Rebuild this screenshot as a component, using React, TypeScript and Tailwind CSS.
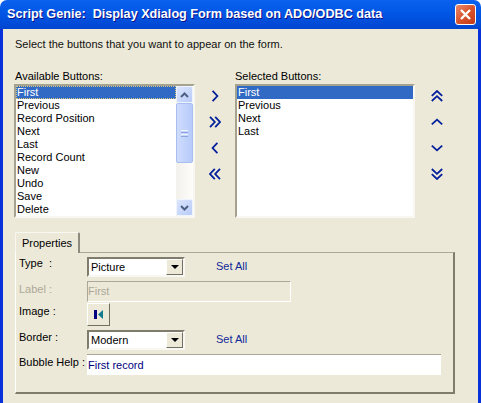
const available = ["First", "Previous", "Record Position", "Next", "Last", "Record Count", "New", "Undo", "Save", "Delete"];
const selected = ["First", "Previous", "Next", "Last"];

function Chevrons({ dir, double }: { dir: "left" | "right" | "up" | "down"; double?: boolean }) {
  const rotate = { right: "", down: "rotate-90", left: "rotate-180", up: "-rotate-90" }[dir];
  return (
    <svg width="12" height="12" viewBox="0 0 12 12" className={rotate} fill="none" stroke="#03209c" strokeWidth="1.8">
      {double ? (
        <>
          <path d="M1 .8 L5.8 6 L1 11.2" />
          <path d="M6.2 .8 L11 6 L6.2 11.2" />
        </>
      ) : (
        <path d="M3.6 .8 L8.4 6 L3.6 11.2" />
      )}
    </svg>
  );
}

function ListBox({ items, focused, children }: { items: string[]; focused?: boolean; children?: React.ReactNode }) {
  return (
    <div className="flex h-[134px] bg-white border-2 border-t-[#a5a290] border-l-[#a5a290] border-r-[#f8f7f2] border-b-[#f8f7f2]">
      <div className="flex-1 min-w-0 overflow-hidden">
        {items.map((item, i) => (
          <div
            key={item}
            className={
              "h-[13px] leading-[13px] pl-px " +
              (i === 0 ? "bg-[#316ac5] text-white " : "text-black ") +
              (i === 0 && focused ? "outline-1 -outline-offset-1 outline-dotted outline-[#d8c880]" : "")
            }
          >
            {item}
          </div>
        ))}
      </div>
      {children}
    </div>
  );
}

function ScrollBar() {
  return (
    <div className="w-[17px] flex flex-col bg-gradient-to-r from-[#f3f1ec] to-[#fdfdfa]">
      <div className="h-[17px] flex items-center justify-center bg-gradient-to-br from-[#dbe5fd] to-[#b9cbf8] border border-[#eef3fe] rounded-[2px]">
        <svg width="9" height="6" viewBox="0 0 9 6" fill="none" stroke="#4d6185" strokeWidth="2"><path d="M1 5 L4.5 1.5 L8 5" /></svg>
      </div>
      <div className="h-[60px] flex flex-col items-center justify-center gap-px bg-gradient-to-r from-[#cfdcfd] to-[#b7cbfa] border border-[#a9bef0] rounded-[2px]">
        <div className="w-[7px] h-px bg-[#eef3fe]" />
        <div className="w-[7px] h-px bg-[#8ca5dd]" />
        <div className="w-[7px] h-px bg-[#eef3fe]" />
        <div className="w-[7px] h-px bg-[#8ca5dd]" />
      </div>
      <div className="flex-1" />
      <div className="h-[17px] flex items-center justify-center bg-gradient-to-br from-[#dbe5fd] to-[#b9cbf8] border border-[#eef3fe] rounded-[2px]">
        <svg width="9" height="6" viewBox="0 0 9 6" fill="none" stroke="#4d6185" strokeWidth="2"><path d="M1 1 L4.5 4.5 L8 1" /></svg>
      </div>
    </div>
  );
}

function Combo({ value }: { value: string }) {
  return (
    <div className="w-[98px] h-[20px] flex items-center justify-between bg-white border-2 border-t-[#7f7c6e] border-l-[#7f7c6e] border-r-[#f8f7f2] border-b-[#f8f7f2]">
      <span className="pl-[2px] text-black">{value}</span>
      <div className="w-[17px] h-[16px] flex items-center justify-center bg-[#ece9d8] border border-t-white border-l-white border-r-[#716f64] border-b-[#716f64]">
        <div className="w-0 h-0 border-x-[4px] border-x-transparent border-t-[4px] border-t-black" />
      </div>
    </div>
  );
}

function Row({ label, disabled, labelClass, children, height }: { label: string; disabled?: boolean; labelClass: string; children: React.ReactNode; height: string }) {
  return (
    <div className={"flex " + height}>
      <span className={"w-[68px] shrink-0 leading-[13px] whitespace-pre " + labelClass + (disabled ? " text-[#aca899]" : " text-black")}>{label}</span>
      {children}
    </div>
  );
}

export default function App() {
  return (
    <div className="w-[481px] h-[403px] flex flex-col overflow-hidden text-[11px] font-['Liberation_Sans',sans-serif]">
      {/* Title bar */}
      <div className="h-[29px] shrink-0 flex items-center justify-between pl-[7px] pr-[5px] rounded-t-[7px] bg-gradient-to-b from-[#0a62ee] via-[#0055e5] to-[#0245cf]">
        <span className="text-white font-bold text-[12.65px] [text-shadow:1px_1px_#0f1089]">Script Genie:&nbsp; Display Xdialog Form based on ADO/ODBC data</span>
        <div className="w-[21px] h-[21px] flex items-center justify-center rounded-[3px] bg-gradient-to-br from-[#e88a6a] via-[#d9532c] to-[#c23a16] border border-white">
          <svg width="13" height="13" viewBox="0 0 13 13" stroke="white" strokeWidth="2.4"><path d="M2 2 L11 11 M11 2 L2 11" /></svg>
        </div>
      </div>

      {/* Client area */}
      <div className="flex-1 flex flex-col bg-[#ece9d8] border-x-[3px] border-x-[#0831d9] pl-[11px] pt-[9px]">
        <p className="leading-[13px] pl-px text-[#111]">Select the buttons that you want to appear on the form.</p>

        <div className="flex mt-[19px]">
          <div className="w-[181px] shrink-0">
            <p className="leading-[13px] pl-px mb-px text-black">Available Buttons:</p>
            <ListBox items={available} focused>
              <ScrollBar />
            </ListBox>
          </div>
          <div className="w-[40px] shrink-0 pt-[20px] flex flex-col items-center gap-[14px]">
            <Chevrons dir="right" />
            <Chevrons dir="right" double />
            <Chevrons dir="left" />
            <Chevrons dir="left" double />
          </div>
          <div className="w-[180px] shrink-0">
            <p className="leading-[13px] mb-px text-black">Selected Buttons:</p>
            <ListBox items={selected} />
          </div>
          <div className="w-[44px] shrink-0 pt-[20px] flex flex-col items-center gap-[14px]">
            <Chevrons dir="up" double />
            <Chevrons dir="up" />
            <Chevrons dir="down" />
            <Chevrons dir="down" double />
          </div>
        </div>

        {/* Properties tab */}
        <div className="w-[440px] ml-px mt-[14px]">
          <div className="relative z-10 w-[65px] h-[21px] -mb-px flex items-center justify-center bg-[#ece9d8] border border-[#f8f7f2] border-r-2 border-r-[#8e8b7e] border-b-0 rounded-t-[2px] text-black">
            Properties
          </div>
          <div className="h-[142px] pl-[3px] pt-[4px] bg-[#ece9d8] border border-t-[#aca899] border-l-white border-r-2 border-r-[#7f7c6e] border-b-2 border-b-[#7f7c6e]">
            <Row label="Type  :" labelClass="" height="h-[24px]">
              <Combo value="Picture" />
              <span className="ml-[31px] mt-[3px] text-[#102a9a] leading-[13px]">Set All</span>
            </Row>
            <Row label="Label :" labelClass="pt-[2px]" disabled height="h-[22px]">
              <div className="w-[204px] h-[21px] flex items-center border border-t-[#aca899] border-l-[#aca899] border-r-white border-b-white text-[#aca899]">First</div>
            </Row>
            <Row label="Image :" labelClass="pt-[2px]" height="h-[27px]">
              <div className="w-[23px] h-[23px] flex items-center justify-center bg-[#ece9d8] border border-t-white border-l-white border-r-[#716f64] border-b-[#716f64]">
                <svg width="10" height="9" viewBox="0 0 10 9">
                  <rect x="0" y="0" width="3" height="9" fill="#000080" />
                  <path d="M9 0 V9 L4 4.5 Z" fill="#137a8c" />
                </svg>
              </div>
            </Row>
            <Row label="Border :" labelClass="pt-px" height="h-[24px]">
              <Combo value="Modern" />
              <span className="ml-[31px] mt-[3px] text-[#102a9a] leading-[13px]">Set All</span>
            </Row>
            <Row label="Bubble Help :" labelClass="pt-[2px]" height="h-[21px]">
              <div className="w-[354px] h-[21px] pl-px flex items-center bg-white border-t border-t-[#aca899] text-[#000080]">First record</div>
            </Row>
          </div>
        </div>
      </div>
    </div>
  );
}
